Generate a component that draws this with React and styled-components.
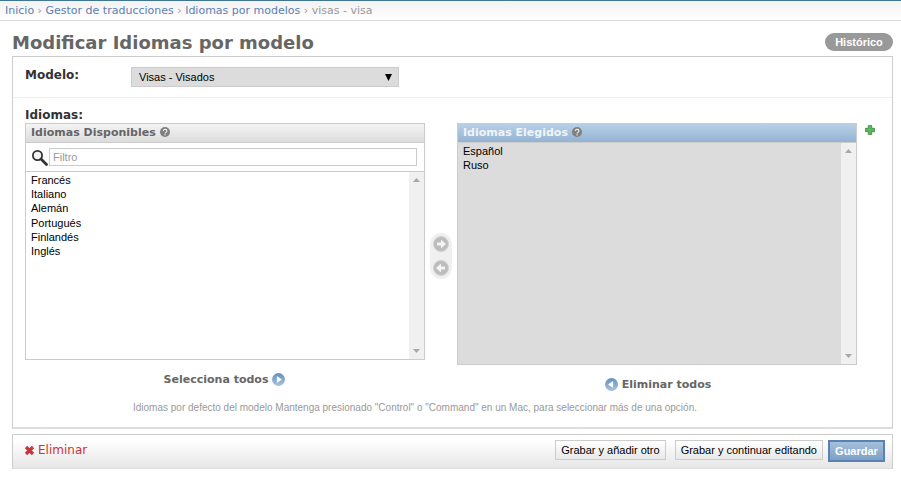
import styled, { createGlobalStyle } from "styled-components";

const GlobalStyle = createGlobalStyle`
  html, body {
    margin: 0;
    padding: 0;
    background: #fff;
    font-family: "Liberation Sans", Arial, sans-serif;
    color: #000;
  }
  * { box-sizing: border-box; }
`;

const Page = styled.div`
  width: 901px;
  height: 477px;
  overflow: hidden;
`;

const Breadcrumbs = styled.div`
  height: 21px;
  padding: 0 5px;
  display: flex;
  align-items: center;
  gap: 3.5px;
  border-top: 1px solid #417690;
  border-bottom: 1px solid #ddd;
  background: linear-gradient(#f2f2f2, #fff);
  font: 11px "DejaVu Sans", sans-serif;
  color: #999;
  white-space: nowrap;
`;

const Crumb = styled.a`
  color: #5b80b2;
`;

const Content = styled.div`
  padding: 0 8px 0 12px;
`;

const TitleRow = styled.div`
  height: 35px;
  display: flex;
  align-items: center;
  justify-content: space-between;
  padding-top: 7px;
`;

const Title = styled.h1`
  margin: 0;
  font: bold 18px "DejaVu Sans", sans-serif;
  color: #666;
`;

const HistoryLink = styled.a`
  width: 68px;
  height: 18px;
  margin-top: -1px;
  border-radius: 9px;
  background: #999;
  color: #fff;
  font: bold 11px/18px "Liberation Sans", sans-serif;
  text-align: center;
`;

const Box = styled.div`
  width: 881px;
  height: 373px;
  border: 1px solid #ccc;
  border-bottom-width: 2px;
  border-bottom-color: #ddd;
`;

const ModelRow = styled.div`
  height: 41px;
  padding: 10px 12px;
  display: flex;
  border-bottom: 1px solid #eee;
`;

const Label = styled.label`
  font: bold 12px "DejaVu Sans", sans-serif;
  color: #333;
`;

const ModelLabel = styled(Label)`
  width: 106px;
  padding-top: 1px;
`;

const ModelSelect = styled.div`
  width: 268px;
  height: 20px;
  padding: 0 6px 0 7px;
  display: flex;
  align-items: center;
  justify-content: space-between;
  background: #dcdcdc;
  border: 1px solid #ccc;
  font-size: 11px;
`;

const Caret = styled.svg`
  width: 7px;
  height: 7px;
`;

const LanguagesRow = styled.div`
  padding: 10px 12px 0;
`;

const LanguagesLabel = styled(Label)`
  display: block;
  height: 15px;
`;

const Selector = styled.div`
  display: flex;
  align-items: flex-start;
`;

const Column = styled.div`
  width: 400px;
`;

const PanelTitle = styled.div`
  height: 20px;
  padding: 0 5px 2px;
  display: flex;
  align-items: center;
  gap: 4px;
  border: 1px solid #ccc;
  background: ${({ $chosen }) =>
    $chosen ? "linear-gradient(#b9d0e6, #93b3d3)" : "linear-gradient(#f4f4f4, #dcdcdc)"};
  color: ${({ $chosen }) => ($chosen ? "#f0f4f9" : "#666")};
  font: bold 11px "DejaVu Sans", sans-serif;
`;

const FilterRow = styled.div`
  height: 28px;
  padding: 0 7px 0 5px;
  display: flex;
  align-items: center;
  gap: 1px;
  border: 1px solid #ccc;
  border-top: none;
  border-bottom: none;
`;

const FilterInput = styled.div`
  flex: 1;
  height: 18px;
  padding: 0 3px;
  border: 1px solid #ccc;
  color: #999;
  font-size: 11px;
  line-height: 16px;
`;

const ListBox = styled.div`
  height: ${({ $h }) => $h}px;
  display: flex;
  border: 1px solid #ccc;
  border-top-width: ${({ $chosen }) => ($chosen ? 0 : 1)}px;
  background: ${({ $chosen }) => ($chosen ? "#dcdcdc" : "#fff")};
`;

const Items = styled.div`
  flex: 1;
  padding: 1px 5px;
`;

const Item = styled.div`
  height: 14.2px;
  font-size: 11px;
  line-height: 14px;
`;

const Scrollbar = styled.div`
  width: 15px;
  padding: 6px 0;
  display: flex;
  flex-direction: column;
  justify-content: space-between;
  align-items: center;
  background: #f0f0f0;
`;

const Arrows = styled.div`
  width: 32px;
  height: 266px;
  display: flex;
  align-items: center;
  justify-content: center;
`;

const ArrowPill = styled.div`
  width: 22px;
  height: 46px;
  padding: 3px;
  display: flex;
  flex-direction: column;
  justify-content: space-between;
  border-radius: 11px;
  background: #f0f0f0;
`;

const Bulk = styled.div`
  height: 38px;
  display: flex;
  align-items: center;
  justify-content: center;
  gap: 4px;
  font: bold 11px "DejaVu Sans", sans-serif;
  color: #666;
`;

const SelectAll = styled(Bulk)`
  padding-right: 1px;
`;

const RemoveAll = styled(Bulk)`
  padding-left: 2px;
`;

const AddLink = styled.svg`
  width: 10px;
  height: 10px;
  margin: 2px 0 0 8px;
`;

const Help = styled.p`
  margin: 0;
  padding-left: 108px;
  color: #999;
  font-size: 10px;
  line-height: 10px;
`;

const SubmitRow = styled.div`
  width: 881px;
  height: 35px;
  margin-top: 5px;
  padding: 5px 7px 0 11px;
  display: flex;
  align-items: flex-start;
  border: 1px solid #ccc;
  border-bottom-color: #ddd;
  background: linear-gradient(#fff 15%, #e6e6e6);
`;

const DeleteLink = styled.a`
  margin: 3px auto 0 0;
  display: flex;
  align-items: center;
  gap: 3px;
  color: #cc3434;
  font: 12px "DejaVu Sans", sans-serif;
`;

const Button = styled.button`
  height: 20px;
  margin-right: 9px;
  padding: 0 5px;
  border: 1px solid #ccc;
  background: linear-gradient(#fff, #e8e8e8);
  font: 11px "Liberation Sans", sans-serif;
  color: #000;
`;

const SaveButton = styled.button`
  width: 57px;
  height: 22px;
  margin-left: -4px;
  padding: 0;
  border: 2px solid #5b80b2;
  background: linear-gradient(#a4c0dc, #7ca0c7);
  color: #fff;
  font: bold 11px "Liberation Sans", sans-serif;
`;

function HelpIcon() {
  return (
    <svg width="10" height="10" viewBox="0 0 10 10">
      <circle cx="5" cy="5" r="5" fill="#808080" />
      <path d="M3.3 4a1.8 1.6 0 1 1 2.6 1.4C5.2 5.8 5 6 5 6.6" fill="none" stroke="#eee" strokeWidth="1.1" />
      <rect x="4.4" y="7.2" width="1.2" height="1.2" fill="#eee" />
    </svg>
  );
}

function SearchIcon() {
  return (
    <svg width="17" height="17" viewBox="0 0 17 17">
      <circle cx="6.5" cy="6.5" r="4.6" fill="#f4f4f4" stroke="#333" strokeWidth="1.8" />
      <path d="M10 10L15.5 15.5" stroke="#333" strokeWidth="2.8" strokeLinecap="round" />
    </svg>
  );
}

function CircleArrow({ dir }) {
  const points = dir === "right" ? "4.5,2.8 9.2,6 4.5,9.2" : "7.5,2.8 2.8,6 7.5,9.2";
  return (
    <svg width="13" height="13" viewBox="0 0 12 12">
      <defs>
        <linearGradient id={`bulk-${dir}`} x1="0" y1="0" x2="0" y2="1">
          <stop offset="0" stopColor="#5f8fc0" />
          <stop offset="1" stopColor="#a9c4de" />
        </linearGradient>
      </defs>
      <circle cx="6" cy="6" r="6" fill={`url(#bulk-${dir})`} />
      <polygon points={points} fill="#fff" />
    </svg>
  );
}

function MoveIcon({ dir }) {
  const d =
    dir === "right"
      ? "M4 6.5h4V3.5L13 8l-5 4.5v-3H4z"
      : "M12 6.5H8V3.5L3 8l5 4.5v-3h4z";
  return (
    <svg width="16" height="16" viewBox="0 0 16 16">
      <circle cx="8" cy="8" r="7.5" fill="#bcbcbc" stroke="#d2d2d2" />
      <path d={d} fill="#f4f4f4" />
    </svg>
  );
}

function ScrollTriangle({ up }) {
  return (
    <svg width="7" height="4" viewBox="0 0 7 4">
      <polygon points={up ? "3.5,0 7,4 0,4" : "0,0 7,0 3.5,4"} fill="#a8a8a8" />
    </svg>
  );
}

const available = ["Francés", "Italiano", "Alemán", "Portugués", "Finlandés", "Inglés"];
const chosen = ["Español", "Ruso"];

export default function App() {
  return (
    <Page>
      <GlobalStyle />
      <Breadcrumbs>
        <Crumb>Inicio</Crumb>›<Crumb>Gestor de traducciones</Crumb>›
        <Crumb>Idiomas por modelos</Crumb>› visas - visa
      </Breadcrumbs>
      <Content>
        <TitleRow>
          <Title>Modificar Idiomas por modelo</Title>
          <HistoryLink>Histórico</HistoryLink>
        </TitleRow>
        <Box>
          <ModelRow>
            <ModelLabel>Modelo:</ModelLabel>
            <ModelSelect>
              Visas - Visados
              <Caret viewBox="0 0 7 7">
                <polygon points="0,0 7,0 3.5,7" fill="#000" />
              </Caret>
            </ModelSelect>
          </ModelRow>
          <LanguagesRow>
            <LanguagesLabel>Idiomas:</LanguagesLabel>
            <Selector>
              <Column>
                <PanelTitle>
                  Idiomas Disponibles <HelpIcon />
                </PanelTitle>
                <FilterRow>
                  <SearchIcon />
                  <FilterInput>Filtro</FilterInput>
                </FilterRow>
                <ListBox $h={189}>
                  <Items>
                    {available.map((name) => (
                      <Item key={name}>{name}</Item>
                    ))}
                  </Items>
                  <Scrollbar>
                    <ScrollTriangle up />
                    <ScrollTriangle />
                  </Scrollbar>
                </ListBox>
                <SelectAll>
                  Selecciona todos <CircleArrow dir="right" />
                </SelectAll>
              </Column>
              <Arrows>
                <ArrowPill>
                  <MoveIcon dir="right" />
                  <MoveIcon dir="left" />
                </ArrowPill>
              </Arrows>
              <Column>
                <PanelTitle $chosen>
                  Idiomas Elegidos <HelpIcon />
                </PanelTitle>
                <ListBox $chosen $h={222}>
                  <Items>
                    {chosen.map((name) => (
                      <Item key={name}>{name}</Item>
                    ))}
                  </Items>
                  <Scrollbar>
                    <ScrollTriangle up />
                    <ScrollTriangle />
                  </Scrollbar>
                </ListBox>
                <RemoveAll>
                  <CircleArrow dir="left" /> Eliminar todos
                </RemoveAll>
              </Column>
              <AddLink viewBox="0 0 10 10">
                <path d="M3.3 0.4h3.4v2.9h2.9v3.4H6.7v2.9H3.3V6.7H0.4V3.3h2.9z" fill="#5cb85c" stroke="#2f7a30" strokeWidth="0.7" />
              </AddLink>
            </Selector>
            <Help>
              Idiomas por defecto del modelo Mantenga presionado "Control" o "Command" en un Mac, para seleccionar más de una opción.
            </Help>
          </LanguagesRow>
        </Box>
        <SubmitRow>
          <DeleteLink>
            <svg width="11" height="11" viewBox="0 0 11 11">
              <path d="M2 2L9 9M9 2L2 9" stroke="#c9353a" strokeWidth="3.2" />
            </svg>
            Eliminar
          </DeleteLink>
          <Button>Grabar y añadir otro</Button>
          <Button>Grabar y continuar editando</Button>
          <SaveButton>Guardar</SaveButton>
        </SubmitRow>
      </Content>
    </Page>
  );
}
